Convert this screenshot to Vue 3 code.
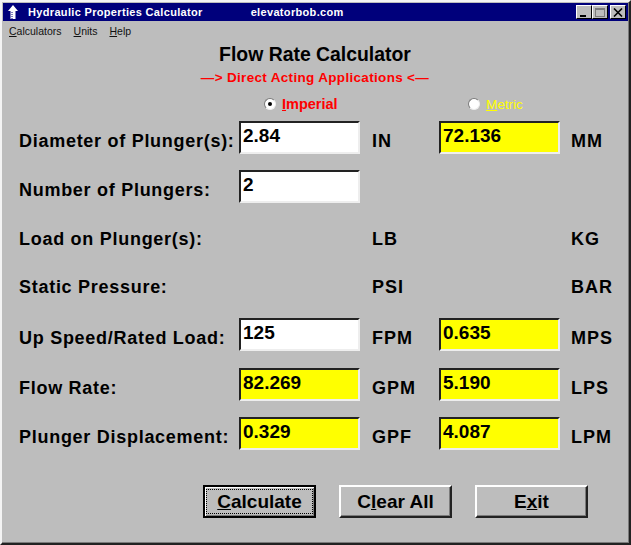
<script setup>
const rows = [
  { label: 'Diameter of Plunger(s):', a: { v: '2.84', y: false }, u1: 'IN', b: { v: '72.136', y: true }, u2: 'MM' },
  { label: 'Number of Plungers:', a: { v: '2', y: false } },
  { label: 'Load on Plunger(s):', u1: 'LB', u2: 'KG' },
  { label: 'Static Pressure:', u1: 'PSI', u2: 'BAR' },
  { label: 'Up Speed/Rated Load:', a: { v: '125', y: false }, u1: 'FPM', b: { v: '0.635', y: true }, u2: 'MPS' },
  { label: 'Flow Rate:', a: { v: '82.269', y: true }, u1: 'GPM', b: { v: '5.190', y: true }, u2: 'LPS' },
  { label: 'Plunger Displacement:', a: { v: '0.329', y: true }, u1: 'GPF', b: { v: '4.087', y: true }, u2: 'LPM' }
]
</script>

<template>
  <div class="win">
    <div class="titlebar">
      <svg class="ticon" width="16" height="16" viewBox="0 0 16 16">
        <path d="M8 1 L13 7 H10.5 V15 H5.5 V7 H3 Z" fill="#fff" />
        <path d="M7 8 V15 M3 11 V15" stroke="#00007b" stroke-width="1" stroke-dasharray="1 1" />
      </svg>
      <span class="ttext">Hydraulic Properties Calculator</span>
      <span class="ttext site">elevatorbob.com</span>
      <div class="wbtns">
        <span class="wbtn"><i class="min"></i></span>
        <span class="wbtn"><i class="max"></i></span>
        <span class="wbtn close">
          <svg width="10" height="9" viewBox="0 0 10 9"><path d="M1 0.5 L9 8.5 M9 0.5 L1 8.5" stroke="#000" stroke-width="1.6" /></svg>
        </span>
      </div>
    </div>
    <div class="menu">
      <span><u>C</u>alculators</span>
      <span><u>U</u>nits</span>
      <span><u>H</u>elp</span>
    </div>
    <h1 class="title">Flow Rate Calculator</h1>
    <div class="sub">&#8212;&gt; Direct Acting Applications &lt;&#8212;</div>
    <div class="radios">
      <label class="radio imp"><span class="dot on"></span><span><u>I</u>mperial</span></label>
      <label class="radio met"><span class="dot"></span><span><u>M</u>etric</span></label>
    </div>
    <div class="form">
      <template v-for="r in rows" :key="r.label">
        <div class="label">{{ r.label }}</div>
        <input v-if="r.a" class="field" :class="{ yellow: r.a.y }" :value="r.a.v" readonly />
        <div v-else></div>
        <div class="unit">{{ r.u1 }}</div>
        <input v-if="r.b" class="field" :class="{ yellow: r.b.y }" :value="r.b.v" readonly />
        <div v-else></div>
        <div class="unit u2">{{ r.u2 }}</div>
      </template>
    </div>
    <div class="actions">
      <button class="btn default"><span class="focus"><u>C</u>alculate</span></button>
      <button class="btn">C<u>l</u>ear All</button>
      <button class="btn">E<u>x</u>it</button>
    </div>
  </div>
</template>

<style>
html, body { margin: 0; background: #bdbdbd; }
</style>

<style scoped>
.win {
  width: 631px; height: 545px; box-sizing: border-box; overflow: hidden;
  background: #bdbdbd; font-family: "Liberation Sans", Arial, sans-serif; color: #000;
  border-top: 2px solid #f4f4f4; border-left: 2px solid #f4f4f4;
  border-right: 2px solid #222; border-bottom: 2px solid #222;
  padding: 1px 1px 0 1px;
  box-shadow: inset -1px -1px 0 #7b7b7b;
}
.titlebar {
  height: 18px; background: #00007b; display: flex; align-items: center; color: #fff;
  padding-right: 2px;
}
.ticon { margin-left: 2px; margin-right: 7px; }
.ttext { font-size: 11px; font-weight: 700; letter-spacing: 0.33px; white-space: nowrap; }
.site { margin-left: 48px; }
.wbtns { margin-left: auto; display: flex; }
.wbtn {
  width: 16px; height: 14px; box-sizing: border-box; background: #bdbdbd; position: relative;
  border-top: 1px solid #fff; border-left: 1px solid #fff;
  border-right: 1px solid #000; border-bottom: 1px solid #000;
  display: flex; align-items: center; justify-content: center;
}
.wbtn.close { margin-left: 2px; }
.min { position: absolute; left: 3px; bottom: 1px; width: 6px; height: 2px; background: #000; }
.max { width: 10px; height: 9px; border: 1px solid #7b7b7b; border-top-width: 2px; box-sizing: border-box; }
.menu {
  height: 19px; display: flex; gap: 12px; align-items: center; padding: 0 0 0 6px; box-sizing: border-box;
  font-size: 10.5px; color: #111;
}
.title { margin: 4px 0 0; font-size: 19.4px; line-height: 20px; font-weight: 700; text-align: center; padding-right: 1px; }
.sub { margin-top: 6px; color: #f00; font-size: 13.5px; line-height: 16px; font-weight: 700; text-align: center; padding-left: 2px; padding-right: 3px; letter-spacing: 0.32px; }
.radios { display: flex; height: 16px; margin-top: 10px; padding-left: 261px; font-size: 13.5px; font-weight: 400; }
.radio { display: flex; align-items: center; gap: 6px; }
.imp { width: 204px; color: #f00; font-weight: 700; font-size: 14.5px; }
.met { color: #ffff00; }
.dot {
  width: 12px; height: 12px; border-radius: 50%; background: #fff; box-sizing: border-box;
  border: 1.5px solid #7b7b7b; border-right-color: #eee; border-bottom-color: #eee; position: relative;
}
.dot.on::after {
  content: ""; position: absolute; left: 2.5px; top: 2.5px; width: 4px; height: 4px; border-radius: 50%; background: #000;
}
.form {
  margin-top: 9px; padding-left: 16px;
  display: grid;
  grid-template-columns: 220px 121px 79px 121px auto;
  grid-template-rows: 49px 49px 48px 51px 50px 49px 34px;
  font-size: 18px; font-weight: 700;
}
.label { height: 33px; display: flex; align-items: center; white-space: nowrap; letter-spacing: 0.72px; color: #000; padding-top: 8px; box-sizing: border-box; }
.unit { height: 33px; display: flex; align-items: center; padding-left: 12px; letter-spacing: 1px; padding-top: 8px; box-sizing: border-box; }
.u2 { padding-left: 11px; }
.field {
  width: 121px; height: 33px; box-sizing: border-box; margin: 0; background: #fff;
  border-style: solid; border-width: 2px; border-color: #222 #eee #eee #222;
  font: 700 19px "Liberation Sans", Arial, sans-serif; padding: 0 0 4px 2px; color: #000; outline: none;
  border-radius: 0;
}
.field.yellow { background: #ff0; }
.actions { position: relative; margin-top: 34px; padding-left: 200px; display: flex; gap: 23px; }
.btn {
  width: 113px; height: 33px; box-sizing: border-box; padding: 0; background: #bdbdbd;
  border-style: solid; border-width: 2px; border-color: #fff #222 #222 #fff;
  box-shadow: inset -1px -1px 0 #7b7b7b; border-radius: 0;
  font: 700 19px "Liberation Sans", Arial, sans-serif; color: #000;
}
.btn.default { outline: 1px solid #000; outline-offset: -1px; border-color: #000; box-shadow: inset 1px 1px 0 #fff, inset -1px -1px 0 #7b7b7b; }
.focus { display: block; margin: 2px; line-height: 23px; outline: 1px dotted #000; }
</style>
